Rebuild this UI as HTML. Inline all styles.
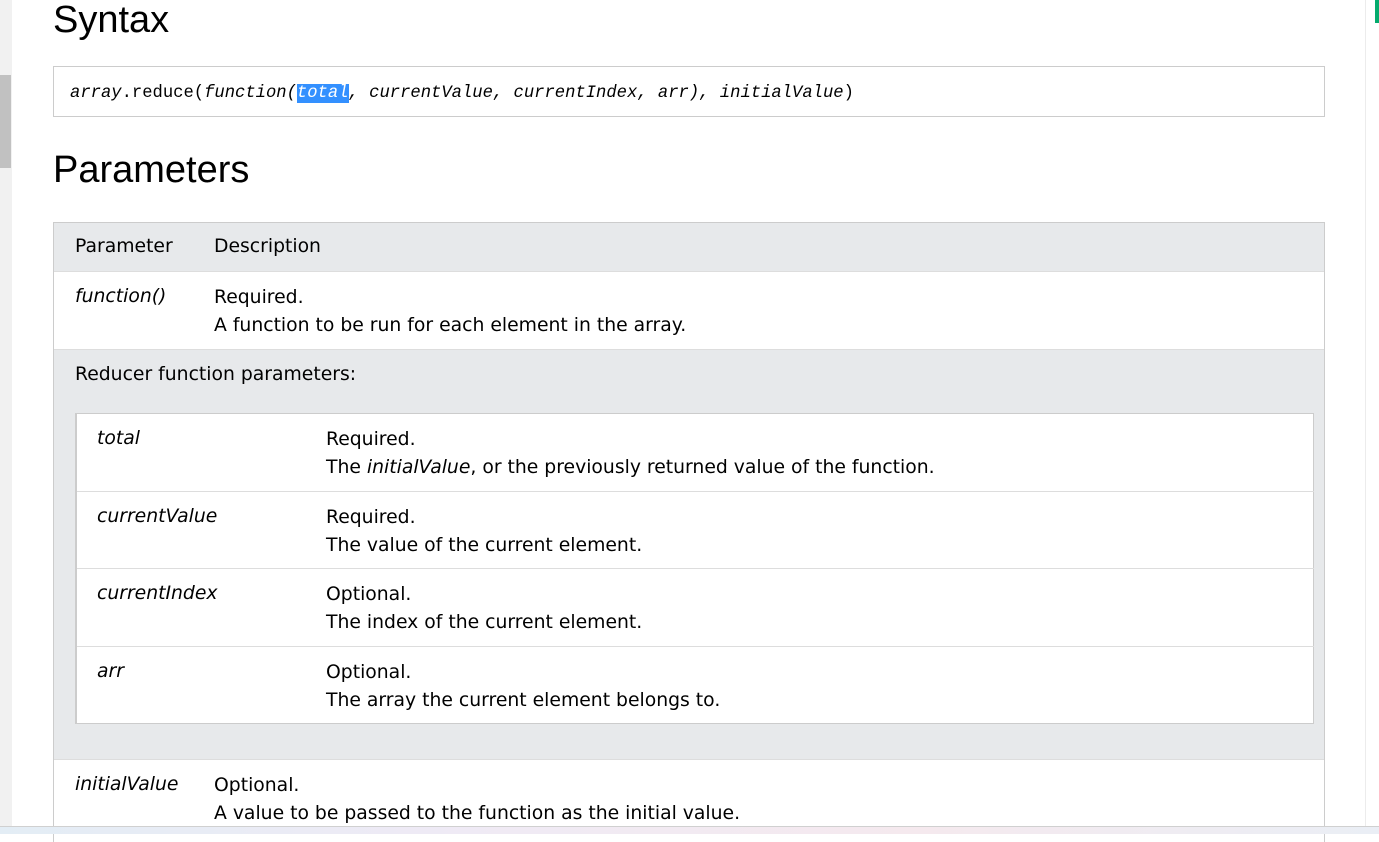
<!DOCTYPE html>
<html><head><meta charset="utf-8"><style>
*{margin:0;padding:0;box-sizing:border-box}
body{width:1379px;height:834px;overflow:hidden;background:#fff;font-family:"DejaVu Sans","Liberation Sans",sans-serif;font-size:18.8px;color:#000;position:relative}
.sb{position:absolute;left:0;top:0;width:12px;height:834px;background:#f1f1f1}
.thumb{position:absolute;left:0;top:75px;width:11px;height:93px;background:#c1c1c1}
.rl{position:absolute;left:1365px;top:0;width:1px;height:834px;background:#ececec}
.gm{position:absolute;left:1375px;top:0;width:4px;height:23px;background:#04aa6d}
.bot{position:absolute;left:0;top:826px;width:1379px;height:8px;background:linear-gradient(90deg,#e3edf5,#efeaf5,#f5e9ee,#eaeef5);border-top:1px solid #d0d0d0}
h2{position:absolute;left:53px;font-family:"Liberation Sans",sans-serif;font-weight:normal;font-size:38px}
.code{position:absolute;left:53px;top:66px;width:1272px;height:51px;border:1px solid #ccc;font-family:"Liberation Mono",monospace;font-size:17.2px;padding:17px 0 0 16px;white-space:pre}
.sel{background:#3390ff;color:#fff}
.t{position:absolute;left:53px;top:222px;width:1272px;height:620px;border:1px solid #ccc;border-bottom:none}
.r{position:absolute;left:0;width:1270px}
.c1{position:absolute;left:21px}
.c2{position:absolute;left:160px;line-height:28px}
.in{position:absolute;left:21px;top:190px;width:1239px;height:311px;border:1px solid #ccc;background:#fff;border-left:2px solid #ccc}
.ir{position:absolute;left:0;width:1237px;border-bottom:1px solid #ddd}
.ir .c1{left:20px}.ir .c2{left:249px}
i{font-style:italic}
</style></head><body>
<div class="sb"><div class="thumb"></div></div>
<div class="rl"></div><div class="gm"></div>
<h2 style="top:-1px">Syntax</h2>
<div class="code"><i>array</i>.reduce(<i>function(<span class="sel">total</span>, currentValue, currentIndex, arr), initialValue</i>)</div>
<h2 style="top:149px">Parameters</h2>
<div class="t">
 <div class="r" style="top:0;height:49px;background:#e7e9eb;border-bottom:1px solid #ddd"><div class="c1" style="top:13px">Parameter</div><div class="c2" style="top:10px">Description</div></div>
 <div class="r" style="top:49px;height:78px;border-bottom:1px solid #ddd"><div class="c1" style="top:14px"><i>function()</i></div><div class="c2" style="top:12px">Required.<br>A function to be run for each element in the array.</div></div>
 <div class="r" style="top:127px;height:410px;background:#e7e9eb;border-bottom:1px solid #ddd">
  <div class="c1" style="top:14px">Reducer function parameters:</div>
  <div class="in" style="top:63px">
   <div class="ir" style="top:0;height:78px"><div class="c1" style="top:14px"><i>total</i></div><div class="c2" style="top:12px">Required.<br>The <i>initialValue</i>, or the previously returned value of the function.</div></div>
   <div class="ir" style="top:78px;height:77px"><div class="c1" style="top:14px"><i>currentValue</i></div><div class="c2" style="top:12px">Required.<br>The value of the current element.</div></div>
   <div class="ir" style="top:155px;height:78px"><div class="c1" style="top:14px"><i>currentIndex</i></div><div class="c2" style="top:12px">Optional.<br>The index of the current element.</div></div>
   <div class="ir" style="top:233px;height:76px;border-bottom:none"><div class="c1" style="top:14px"><i>arr</i></div><div class="c2" style="top:12px">Optional.<br>The array the current element belongs to.</div></div>
  </div>
 </div>
 <div class="r" style="top:537px;height:80px"><div class="c1" style="top:14px"><i>initialValue</i></div><div class="c2" style="top:12px">Optional.<br>A value to be passed to the function as the initial value.</div></div>
</div>
<div class="bot"></div>
</body></html>
